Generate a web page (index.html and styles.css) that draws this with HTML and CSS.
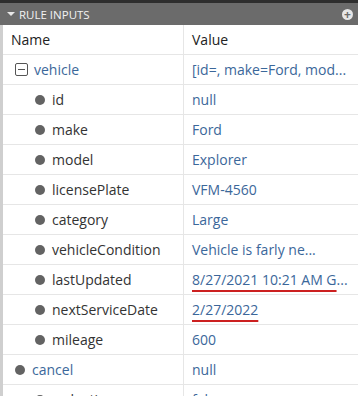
FILE: index.html
```html
<!DOCTYPE html>
<html lang="en">
<head>
  <meta charset="UTF-8">
  <title>Rule Inputs</title>
  <link rel="stylesheet" href="styles.css">
</head>
<body>
  <div class="topline"></div>
  <div class="panel-head">
    <span class="caret"></span>
    <span class="panel-title">RULE INPUTS</span>
    <span class="add">+</span>
  </div>
  <div class="panel">
    <table class="inputs">
      <tr class="head">
        <th class="col-name">Name</th>
        <th>Value</th>
      </tr>
      <tr>
        <td><span class="name top"><span class="toggle"></span><span class="link">vehicle</span></span></td>
        <td class="val">[id=, make=Ford, mod...</td>
      </tr>
      <tr>
        <td><span class="name child"><span class="dot"></span>id</span></td>
        <td class="val">null</td>
      </tr>
      <tr>
        <td><span class="name child"><span class="dot"></span>make</span></td>
        <td class="val">Ford</td>
      </tr>
      <tr>
        <td><span class="name child"><span class="dot"></span>model</span></td>
        <td class="val">Explorer</td>
      </tr>
      <tr>
        <td><span class="name child"><span class="dot"></span>licensePlate</span></td>
        <td class="val">VFM-4560</td>
      </tr>
      <tr>
        <td><span class="name child"><span class="dot"></span>category</span></td>
        <td class="val">Large</td>
      </tr>
      <tr>
        <td><span class="name child"><span class="dot"></span>vehicleCondition</span></td>
        <td class="val">Vehicle is farly ne...</td>
      </tr>
      <tr>
        <td><span class="name child"><span class="dot"></span>lastUpdated</span></td>
        <td class="val"><span class="mark">8/27/2021 10:21 AM G</span>...</td>
      </tr>
      <tr>
        <td><span class="name child"><span class="dot"></span>nextServiceDate</span></td>
        <td class="val"><span class="mark">2/27/2022</span></td>
      </tr>
      <tr>
        <td><span class="name child"><span class="dot"></span>mileage</span></td>
        <td class="val">600</td>
      </tr>
      <tr>
        <td><span class="name top"><span class="dot"></span><span class="link">cancel</span></span></td>
        <td class="val">null</td>
      </tr>
      <tr>
        <td><span class="name child"><span class="dot"></span>reduction</span></td>
        <td class="val">false</td>
      </tr>
    </table>
  </div>
</body>
</html>
```

FILE: styles.css
```css
body {
  margin: 0;
  font-family: "Open Sans", Arial, sans-serif;
  background: #fff;
  color: #333;
  overflow: hidden;
}

.topline {
  height: 3px;
  background: #2e2e2e;
}

.panel-head {
  height: 22px;
  background: #6b6b6b;
  display: flex;
  align-items: center;
  color: #fff;
  padding: 0 5px 0 7px;
}

.caret {
  width: 0;
  height: 0;
  border-left: 4px solid transparent;
  border-right: 4px solid transparent;
  border-top: 4px solid #e8e8e8;
  margin-right: 4px;
}

.panel-title {
  font-size: 11.5px;
  flex: 1;
  color: #f2f2f2;
}

.add {
  width: 11px;
  height: 11px;
  border-radius: 50%;
  background: #e6e6e6;
  color: #6b6b6b;
  font-size: 12px;
  font-weight: bold;
  line-height: 11px;
  text-align: center;
}

.panel {
  border-left: 3px solid #cfcfcf;
}

.inputs {
  border-collapse: collapse;
  width: 100%;
  table-layout: fixed;
  font-size: 14px;
}

.inputs th,
.inputs td {
  height: 29px;
  padding: 0 0 0 8px;
  border-bottom: 1px solid #e6e6e6;
  white-space: nowrap;
  overflow: hidden;
  text-align: left;
  font-weight: normal;
}

.inputs th {
  height: 29px;
  color: #222;
}

.inputs td:first-child,
.inputs th:first-child {
  border-right: 1px solid #e6e6e6;
}

.col-name {
  width: 172px;
}

.name {
  display: flex;
  align-items: center;
}

.name.child {
  padding-left: 24px;
}

.name.top {
  padding-left: 4px;
}

.toggle {
  width: 11px;
  height: 11px;
  border: 1px solid #555;
  border-radius: 2px;
  margin-right: 6px;
  position: relative;
}

.toggle::after {
  content: "";
  position: absolute;
  left: 2px;
  right: 2px;
  top: 5px;
  height: 1px;
  background: #555;
}

.dot {
  width: 10px;
  height: 10px;
  border-radius: 50%;
  background: #636363;
  margin-right: 7px;
}

.link,
.val {
  color: #3b679a;
}

.val {
  padding-left: 8px;
}

.mark {
  text-decoration: underline;
  text-decoration-color: #cc2020;
  text-decoration-thickness: 2px;
  text-underline-offset: 5px;
}
```
